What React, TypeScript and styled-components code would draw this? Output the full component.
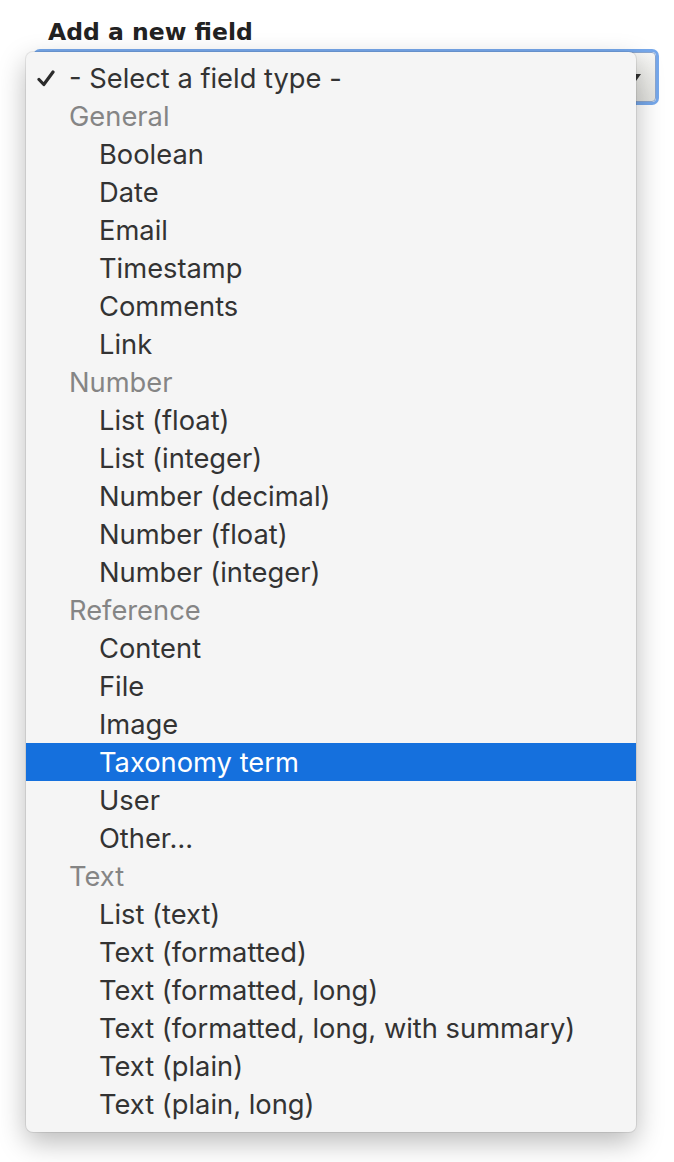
import React from 'react'
import styled, { createGlobalStyle } from 'styled-components'

type Option = { label: string; level: 0 | 1; group?: boolean; checked?: boolean; active?: boolean }

const options: Option[] = [
  { label: '- Select a field type -', level: 0, checked: true },
  { label: 'General', level: 0, group: true },
  { label: 'Boolean', level: 1 },
  { label: 'Date', level: 1 },
  { label: 'Email', level: 1 },
  { label: 'Timestamp', level: 1 },
  { label: 'Comments', level: 1 },
  { label: 'Link', level: 1 },
  { label: 'Number', level: 0, group: true },
  { label: 'List (float)', level: 1 },
  { label: 'List (integer)', level: 1 },
  { label: 'Number (decimal)', level: 1 },
  { label: 'Number (float)', level: 1 },
  { label: 'Number (integer)', level: 1 },
  { label: 'Reference', level: 0, group: true },
  { label: 'Content', level: 1 },
  { label: 'File', level: 1 },
  { label: 'Image', level: 1 },
  { label: 'Taxonomy term', level: 1, active: true },
  { label: 'User', level: 1 },
  { label: 'Other…', level: 1 },
  { label: 'Text', level: 0, group: true },
  { label: 'List (text)', level: 1 },
  { label: 'Text (formatted)', level: 1 },
  { label: 'Text (formatted, long)', level: 1 },
  { label: 'Text (formatted, long, with summary)', level: 1 },
  { label: 'Text (plain)', level: 1 },
  { label: 'Text (plain, long)', level: 1 },
]

const GlobalStyle = createGlobalStyle`
  html, body { margin:0; padding:0; background:#fff; }
  body { font-family:Inter, "Liberation Sans", Arial, sans-serif; }
`

const Page = styled.div`
  width:674px;
  height:1162px;
  padding:18px 0 0 0;
  box-sizing:border-box;
`

const Title = styled.div`
  margin-left:48px;
  font-family:"DejaVu Sans", sans-serif;
  font-weight:bold;
  font-size:23.5px;
  line-height:28px;
  color:#222;
`

const Field = styled.div`
  position:relative;
  margin:6px 0 0 36px;
  width:620px;
  height:50px;
`

const SelectBox = styled.div`
  height:100%;
  box-sizing:border-box;
  border:1px solid #8aa6cf;
  border-radius:4px;
  background:linear-gradient(#f7f7f5, #e2e2de);
  box-shadow:0 0 0 3px #76a8eb;
  display:flex;
  align-items:center;
  justify-content:flex-end;
  padding-right:14px;
`

const Arrow = styled.div`
  width:0;height:0;
  border-left:5px solid transparent;
  border-right:5px solid transparent;
  border-top:7px solid #333;
`

const Menu = styled.ul`
  position:absolute;
  left:-10px;
  top:0;
  width:610px;
  margin:0;
  padding:7px 0 9px;
  list-style:none;
  background:#f5f5f5;
  border-radius:7px;
  box-shadow:0 0 0 1px rgba(0,0,0,0.08), 0 10px 28px rgba(0,0,0,0.28);
`

const Item = styled.li<{ $level: number; $group?: boolean; $active?: boolean }>`
  position:relative;
  height:38px;
  display:flex;
  align-items:center;
  padding-left:${p => (p.$level ? 73 : 43)}px;
  font-size:27.3px;
  color:${p => (p.$active ? '#fff' : p.$group ? '#858585' : '#333')};
  background:${p => (p.$active ? '#1570dd' : 'transparent')};
  white-space:nowrap;
`

const Check = styled.svg`
  position:absolute;
  left:11px;
  top:11px;
`

const CheckIcon = () => (
  <Check width="18" height="17" viewBox="0 0 18 17">
    <path d="M2 9.5 L6.8 14.5 L16 2" fill="none" stroke="#2b2b2b" strokeWidth="3.2" strokeLinecap="round" strokeLinejoin="round" />
  </Check>
)

export default function App() {
  return (
    <Page>
      <GlobalStyle />
      <Title>Add a new field</Title>
      <Field>
        <SelectBox><Arrow /></SelectBox>
        <Menu>
          {options.map(o => (
            <Item key={o.label} $level={o.level} $group={o.group} $active={o.active}>
              {o.checked && <CheckIcon />}
              {o.label}
            </Item>
          ))}
        </Menu>
      </Field>
    </Page>
  )
}
